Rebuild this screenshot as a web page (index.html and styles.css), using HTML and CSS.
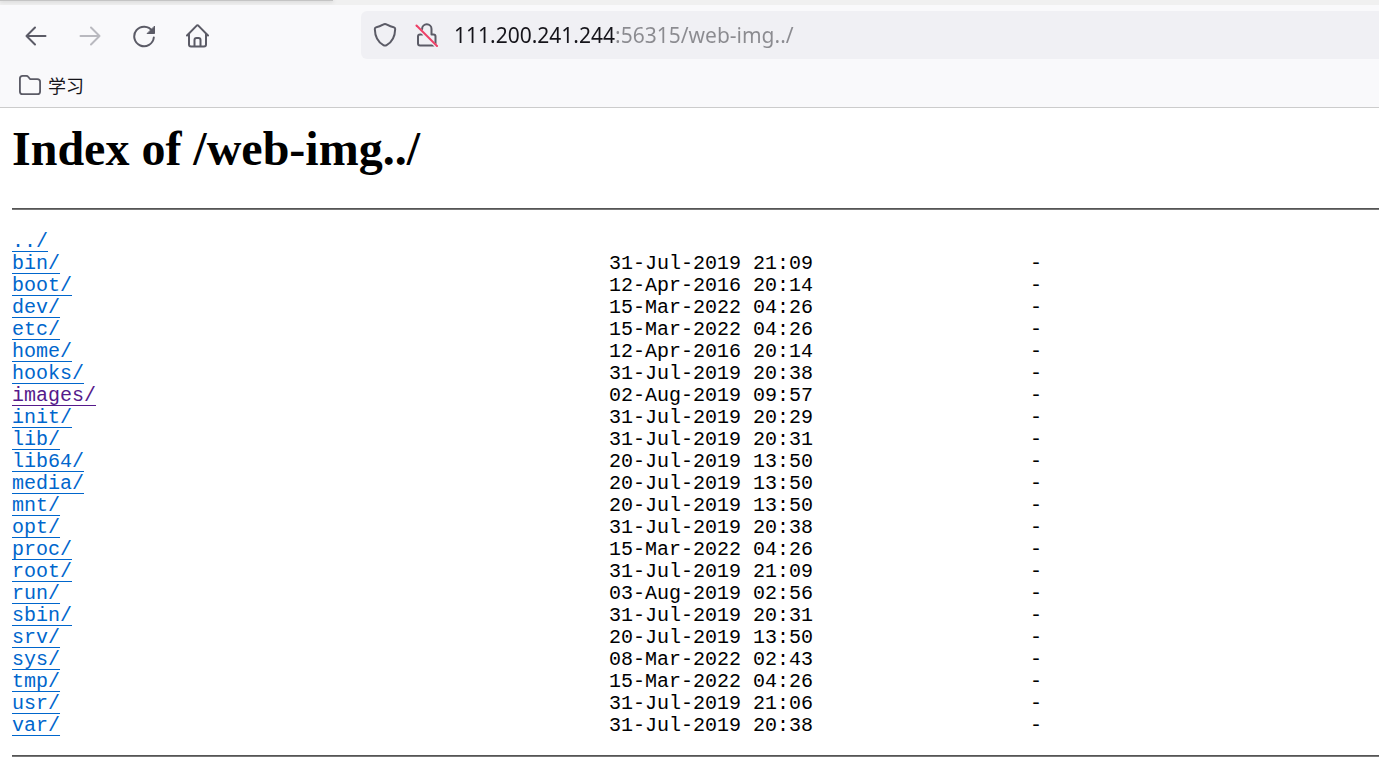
FILE: index.html
```
<!DOCTYPE html>
<html lang="zh-CN">
<head>
  <meta charset="UTF-8" />
  <meta name="viewport" content="width=device-width, initial-scale=1.0"/>
  <title>Index of /web-img../</title>
  <link rel="stylesheet" href="styles.css">
</head>
<body>
  <header class="browser">
    <div class="tabstrip"><div class="tab"></div></div>

    <div class="toolbar">
      <nav class="nav-buttons">
        <button type="button" aria-label="Back">
          <svg viewBox="0 0 24 24"><path d="M21.500 12H2.500M11 3.500L2.500 12l8.500 8.500"/></svg>
        </button>
        <button type="button" aria-label="Forward" disabled>
          <svg viewBox="0 0 24 24"><path d="M2.500 12h19M13 3.500l8.500 8.500-8.500 8.500"/></svg>
        </button>
        <button type="button" aria-label="Reload">
          <svg viewBox="0 0 24 24"><path d="M20.200 7A9.800 9.800 0 1 0 21.800 13.500"/><path class="solid" d="M22.500 2.500v7H15.500z"/></svg>
        </button>
        <button type="button" aria-label="Home">
          <svg viewBox="0 0 24 24"><path d="M1 11.500L10.700 1.600q.8-.7 1.600 0l9.700 9.900M3 10v10.500q0 2 2 2h13q2 0 2-2V10M8.500 22.500V16q0-2 2-2h2q2 0 2 2v6.500"/></svg>
        </button>
      </nav>

      <div class="urlbar">
        <svg viewBox="0 0 24 24" aria-hidden="true"><path d="M12 1q1 0 2 .7 3.500 2 6.700 2.500 1.500.3 1.500 1.700C22 14 18.500 19.500 13.300 22.300q-1.300.6-2.600 0C5.500 19.500 2 14 1.800 5.900q0-1.400 1.500-1.700 3.200-.5 6.700-2.500 1-.7 2-.7z"/></svg>
        <svg viewBox="0 0 24 24" aria-hidden="true"><path d="M7.500 11.500H5q-2 0-2 2v7q0 2 2 2h13.500q2 0 2-2v-7q0-2-2-2H16.500V6a4.700 4.700 0 0 0-9.400 0"/><path class="under" d="M2 4l20 20"/><path class="slash" d="M1.500 2.500l20.500 20.500"/></svg>
        <input type="text" class="url" aria-label="Address" value="111.200.241.244:56315/web-img../" spellcheck="false">
      </div>
    </div>

    <div class="bookmarks">
      <a href="#">
        <svg viewBox="0 0 24 24" aria-hidden="true"><path d="M1 19V5q0-3 3-3h4q1.300 0 2 1l2 2.500h8q3 0 3 3V19q0 3-3 3H4q-3 0-3-3z"/></svg>
        <span>学习</span>
      </a>
    </div>
  </header>

  <main>
    <h1>Index of /web-img../</h1>
    <hr>
    <table>
      <tbody>
        <tr><td class="name"><a href="#">../</a></td><td class="date"></td><td></td></tr>
        <tr><td class="name"><a href="#">bin/</a></td><td class="date">31-Jul-2019 21:09</td><td>-</td></tr>
        <tr><td class="name"><a href="#">boot/</a></td><td class="date">12-Apr-2016 20:14</td><td>-</td></tr>
        <tr><td class="name"><a href="#">dev/</a></td><td class="date">15-Mar-2022 04:26</td><td>-</td></tr>
        <tr><td class="name"><a href="#">etc/</a></td><td class="date">15-Mar-2022 04:26</td><td>-</td></tr>
        <tr><td class="name"><a href="#">home/</a></td><td class="date">12-Apr-2016 20:14</td><td>-</td></tr>
        <tr><td class="name"><a href="#">hooks/</a></td><td class="date">31-Jul-2019 20:38</td><td>-</td></tr>
        <tr><td class="name"><a href="#" class="seen">images/</a></td><td class="date">02-Aug-2019 09:57</td><td>-</td></tr>
        <tr><td class="name"><a href="#">init/</a></td><td class="date">31-Jul-2019 20:29</td><td>-</td></tr>
        <tr><td class="name"><a href="#">lib/</a></td><td class="date">31-Jul-2019 20:31</td><td>-</td></tr>
        <tr><td class="name"><a href="#">lib64/</a></td><td class="date">20-Jul-2019 13:50</td><td>-</td></tr>
        <tr><td class="name"><a href="#">media/</a></td><td class="date">20-Jul-2019 13:50</td><td>-</td></tr>
        <tr><td class="name"><a href="#">mnt/</a></td><td class="date">20-Jul-2019 13:50</td><td>-</td></tr>
        <tr><td class="name"><a href="#">opt/</a></td><td class="date">31-Jul-2019 20:38</td><td>-</td></tr>
        <tr><td class="name"><a href="#">proc/</a></td><td class="date">15-Mar-2022 04:26</td><td>-</td></tr>
        <tr><td class="name"><a href="#">root/</a></td><td class="date">31-Jul-2019 21:09</td><td>-</td></tr>
        <tr><td class="name"><a href="#">run/</a></td><td class="date">03-Aug-2019 02:56</td><td>-</td></tr>
        <tr><td class="name"><a href="#">sbin/</a></td><td class="date">31-Jul-2019 20:31</td><td>-</td></tr>
        <tr><td class="name"><a href="#">srv/</a></td><td class="date">20-Jul-2019 13:50</td><td>-</td></tr>
        <tr><td class="name"><a href="#">sys/</a></td><td class="date">08-Mar-2022 02:43</td><td>-</td></tr>
        <tr><td class="name"><a href="#">tmp/</a></td><td class="date">15-Mar-2022 04:26</td><td>-</td></tr>
        <tr><td class="name"><a href="#">usr/</a></td><td class="date">31-Jul-2019 21:06</td><td>-</td></tr>
        <tr><td class="name"><a href="#">var/</a></td><td class="date">31-Jul-2019 20:38</td><td>-</td></tr>
      </tbody>
    </table>
    <hr>
  </main>
</body>
</html>
```
FILE: styles.css
```
body {
  margin: 0;
  background-color: #fff;
  color: #000;
  font-family: "Liberation Serif", serif;
}

/* browser chrome */
.browser {
  background-color: #f9f9fb;
  border-bottom: 1px solid #cccccc;
  font-family: "Noto Sans", "Noto Sans CJK SC", sans-serif;
}

.tabstrip {
  height: 5px;
  background-color: #f0f0f0;
  overflow: hidden;
}

.tab {
  width: 333px;
  height: 1px;
  background-color: #c4c4c4;
  box-shadow: 0 0 4px #999;
}

.toolbar {
  display: flex;
  align-items: center;
  padding-top: 6px;
}

.nav-buttons {
  display: flex;
  gap: 30px;
  width: 337px;
  padding: 2px 0 0 24px;
}

.nav-buttons button {
  display: flex;
  padding: 0;
  border: none;
  background-color: transparent;
  cursor: pointer;
}

.nav-buttons button[disabled] {
  opacity: 0.4;
}

svg {
  width: 24px;
  height: 24px;
  flex: none;
  fill: none;
  stroke: #5b5b66;
  stroke-width: 2;
  stroke-linecap: round;
  stroke-linejoin: round;
}

.solid { fill: #5b5b66; stroke-width: 1; }
.under { stroke: #f0f0f4; stroke-width: 3; }
.slash { stroke: #ee3f66; }

.urlbar {
  flex: 1;
  display: flex;
  align-items: center;
  gap: 18px;
  height: 48px;
  padding-left: 12px;
  background-color: #f0f0f4;
  border-radius: 6px 0 0 6px;
}

/* host is dark, the port and path are grey */
.url {
  flex: 1;
  min-width: 0;
  height: 32px;
  margin-left: -3px;
  padding: 0;
  border: none;
  outline: none;
  font: 21px "Noto Sans", sans-serif;
  color: #8b8b90;
  background: linear-gradient(to right, #15141a 161px, #8b8b90 161px);
  -webkit-background-clip: text;
  background-clip: text;
  -webkit-text-fill-color: transparent;
}

.bookmarks {
  display: flex;
  height: 48px;
  padding-left: 19px;
}

.bookmarks a {
  display: flex;
  align-items: center;
  gap: 7px;
  padding-top: 4px;
  color: #15141a;
  font-size: 18px;
  text-decoration: none;
}

.bookmarks svg {
  width: 22px;
  height: 22px;
}

/* directory listing */
main {
  padding-left: 12px;
}

h1 {
  margin: 13px 0 32px;
  font-size: 48px;
  line-height: 55px;
}

hr {
  margin: 0;
  border: none;
  border-top: 1px solid #555;
  border-bottom: 1px solid #777;
}

table {
  margin: 21px 0 18px;
  border-collapse: collapse;
  font-family: "Liberation Mono", monospace;
  font-size: 20px;
  line-height: 22px;
}

td {
  height: 22px;
  padding: 0;
}

.name { width: 597px; }
.date { width: 421px; }

td a {
  color: #0066cc;
  text-decoration: underline;
  text-decoration-thickness: 1px;
  text-underline-offset: 4px;
}

td a.seen {
  color: #551a8b;
}
```
